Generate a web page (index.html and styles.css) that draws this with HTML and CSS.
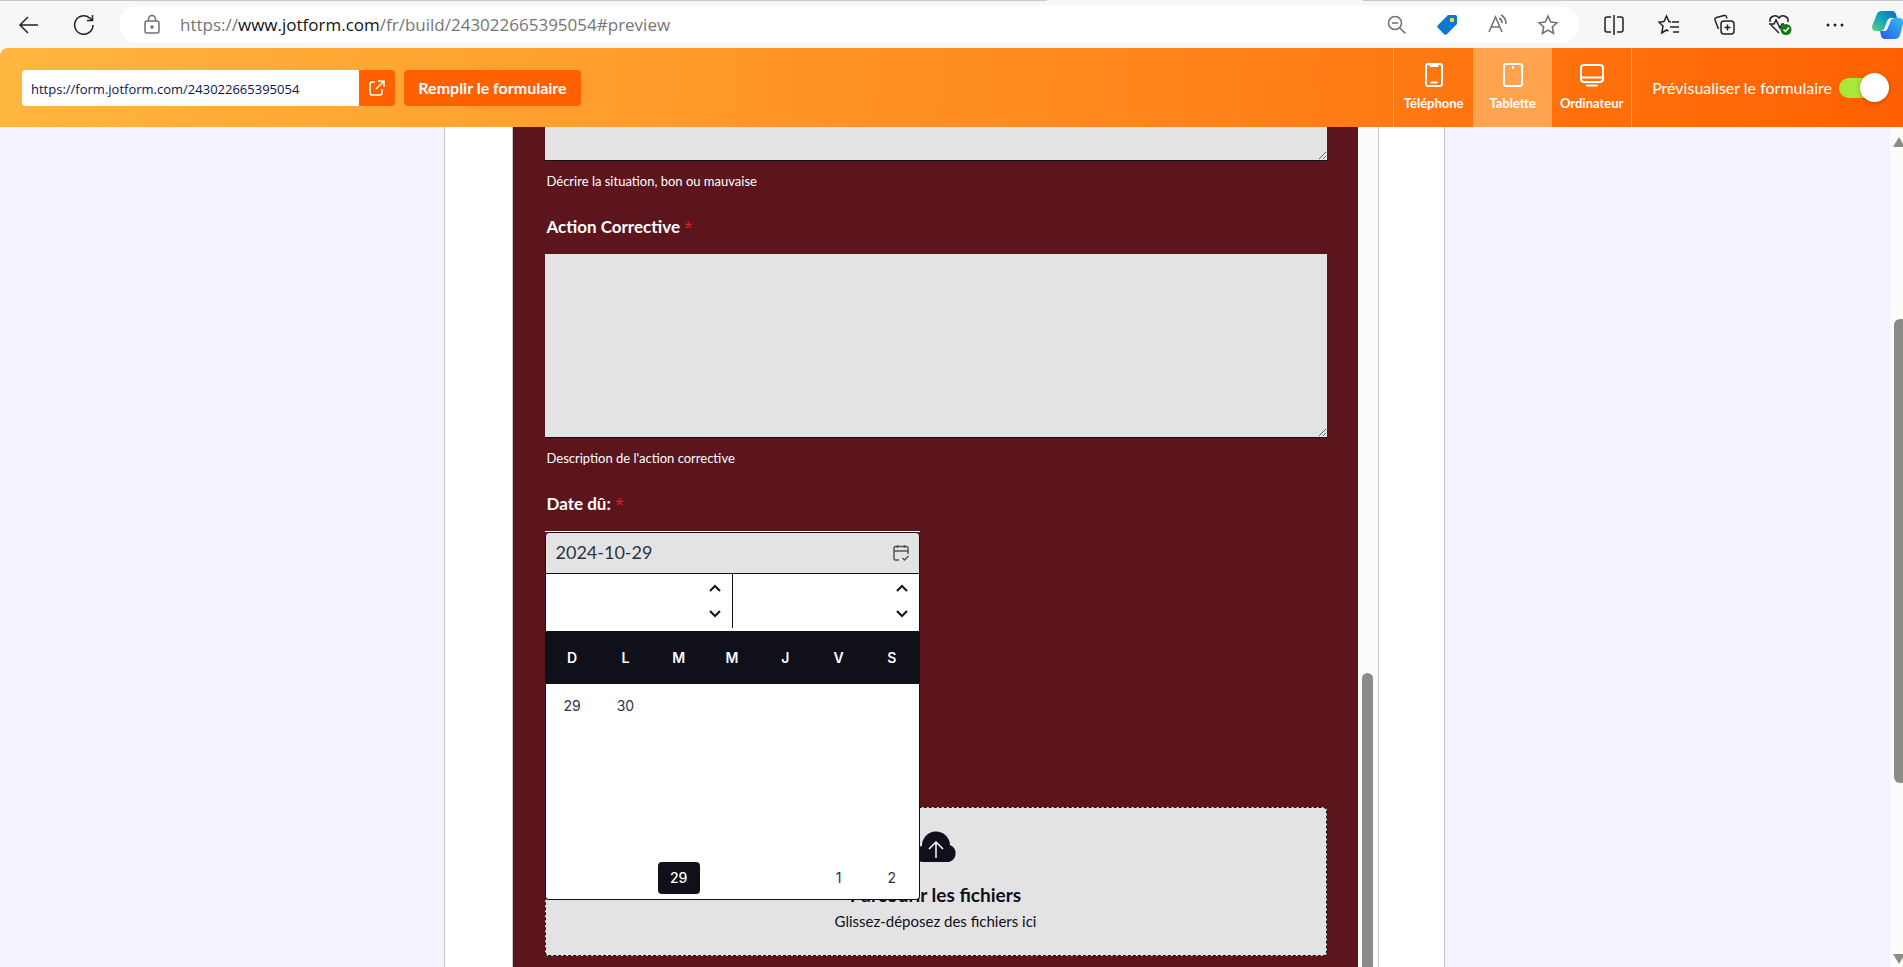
FILE: index.html
```
<!DOCTYPE html>
<html lang="fr">
<head>
  <meta charset="UTF-8">
  <meta name="viewport" content="width=device-width, initial-scale=1.0">
  <title>Prévisualiser le formulaire</title>
  <link rel="stylesheet" href="styles.css">
</head>
<body>

  <!-- browser bar -->
  <header class="browser">
    <button class="nav-btn" aria-label="Retour">
      <svg width="22" height="20" viewBox="0 0 22 20"><path d="M20 10H2M10 2L2 10l8 8"/></svg>
    </button>
    <button class="nav-btn reload" aria-label="Actualiser">
      <svg width="22" height="22" viewBox="0 0 22 22"><path d="M20 11a9.200 9.200 0 1 1-3.500-7.200L19 6M19.500 1v5.500H14"/></svg>
    </button>
    <div class="address">
      <svg class="lock" width="18" height="22" viewBox="0 0 18 22"><rect x="2" y="7" width="14" height="12" rx="2"/><path d="M5.500 7V5a3.500 3.500 0 0 1 7 0v2"/><circle cx="9" cy="13" r="1" fill="#555"/></svg>
      <span class="url">https://<b>www.jotform.com</b>/fr/build/243022665395054#preview</span>
      <div class="address-icons">
        <svg width="20" height="22" viewBox="0 0 20 22"><circle cx="8" cy="9" r="6.500"/><path d="M5 9h6M13 14l5.500 5.500"/></svg>
        <svg width="24" height="22" viewBox="0 0 24 22"><path d="M13 1h7a2 2 0 0 1 2 2v7L12 20a2 2 0 0 1-3 0l-6-6a2 2 0 0 1 0-3z" fill="#0b78d0" stroke="none"/><circle cx="17" cy="6" r="2.300" fill="#f6d34a" stroke="none"/></svg>
        <svg width="22" height="22" viewBox="0 0 22 22"><path d="M2 18L8.500 3 15 18M4.500 13h8M12 4c2 1 3 3 3 5M14 1c4 2 5 5 5 9"/></svg>
        <svg width="22" height="22" viewBox="0 0 22 22"><path d="M11 2l2.700 6 6.300.7-4.700 4.300 1.300 6.500-5.600-3.300-5.600 3.300 1.300-6.500L2 8.700 8.300 8z"/></svg>
      </div>
    </div>
    <div class="browser-icons">
      <svg width="22" height="22" viewBox="0 0 22 22"><path d="M8 3H4a2 2 0 0 0-2 2v11a2 2 0 0 0 2 2h4M14 3h4a2 2 0 0 1 2 2v11a2 2 0 0 1-2 2h-4M11 1v20"/></svg>
      <svg width="22" height="22" viewBox="0 0 22 22"><path d="M13 8l-2-.500L8.500 2 6 7.500l-5 .700L5 12l-1.200 7 4.700-3 2 1.200M14 8h7M12 13h9M15 18h6"/></svg>
      <svg width="22" height="22" viewBox="0 0 22 22"><rect x="8" y="7" width="13" height="13" rx="3"/><path d="M14.500 10.500v6M11.500 13.500h6M5.500 15L2 6a2 2 0 0 1 1.500-2.500L11 1.500A2 2 0 0 1 13.500 3l.5 1.500"/></svg>
      <svg width="24" height="22" viewBox="0 0 24 22"><path d="M11 19L3 11M2 8c-1-6 6-8 9-4 3-4 10-2 9 4M1 10h5l2-4 4 8 2-4h2"/><circle cx="18" cy="15.500" r="5.500" fill="#107c10" stroke="none"/><path d="M15.500 15.500l2 2 3.500-4" stroke="#fff"/></svg>
      <svg width="20" height="22" viewBox="0 0 20 22"><g fill="#222" stroke="none"><circle cx="3" cy="11" r="1.500"/><circle cx="10" cy="11" r="1.500"/><circle cx="17" cy="11" r="1.500"/></g></svg>
      <svg class="copilot" width="32" height="28" viewBox="0 0 32 28">
        <defs>
          <linearGradient id="cp1" x1="0" y1="1" x2="1" y2="0"><stop offset="0" stop-color="#5fd08a"/><stop offset=".5" stop-color="#12a5b5"/><stop offset="1" stop-color="#1066c4"/></linearGradient>
          <linearGradient id="cp2" x1="0" y1="1" x2="1" y2="0"><stop offset="0" stop-color="#2458e6"/><stop offset="1" stop-color="#35c3f0"/></linearGradient>
        </defs>
        <g stroke="none">
          <path d="M10 0h10c3 0 4 2 5 7h-5c-3 0-4 1-5 4l-2 5c-1 3-2 4-4.500 4H5c-4 0-6-2-4.500-6L4.500 4C5.500 1 7 0 10 0z" fill="url(#cp1)"/>
          <path d="M22 28H13c-3 0-4-2-5-8h3c3 0 4-1 5-4l2-5c1-3 2-4 4.500-4h4c4 0 6 2 4.500 6l-3 11c-1 3-3 4-6 4z" fill="url(#cp2)"/>
          <path d="M20 7c-3 0-4 1-5 4l-2 5c-1 3-2 4-4 4h2c3 0 4-1 5-4l2-5c1-3 2-4 4.500-4z" fill="#fff"/>
        </g>
      </svg>
    </div>
  </header>

  <!-- preview toolbar -->
  <div class="toolbar">
    <div class="share">
      <input type="text" class="share-url" aria-label="Lien du formulaire" value="https://form.jotform.com/243022665395054">
      <button class="share-open" aria-label="Ouvrir">
        <svg width="16" height="18" viewBox="0 0 16 18"><path d="M6 3H3a2 2 0 0 0-2 2v9a2 2 0 0 0 2 2h8a2 2 0 0 0 2-2v-4M9 2h6v6M15 2L7 10"/></svg>
      </button>
    </div>
    <button class="fill-btn">Remplir le formulaire</button>
    <div class="devices">
      <button class="device">
        <svg width="20" height="26" viewBox="0 0 20 26"><rect x="2" y="2" width="16" height="22" rx="2"/><path d="M6.500 2v2h7V2M7.500 20.500h5"/></svg>
        Téléphone
      </button>
      <button class="device active">
        <svg width="22" height="26" viewBox="0 0 22 26"><rect x="2" y="2" width="18" height="22" rx="2"/><path d="M11 5v1"/></svg>
        Tablette
      </button>
      <button class="device">
        <svg width="26" height="26" viewBox="0 0 26 26"><rect x="2" y="3" width="22" height="17" rx="3"/><path d="M2 15.500h22M8 23.500h10"/></svg>
        Ordinateur
      </button>
    </div>
    <label class="preview">
      Prévisualiser le formulaire
      <input type="checkbox" class="toggle" checked>
    </label>
  </div>

  <main class="workspace">
    <div class="canvas">
      <div class="tablet">
        <div class="frame">
          <form class="form">
            <textarea class="area cut" aria-label="Situation"></textarea>
            <p class="hint">Décrire la situation, bon ou mauvaise</p>

            <label class="label" for="action">Action Corrective <span class="req">*</span></label>
            <textarea class="area" id="action"></textarea>
            <p class="hint">Description de l'action corrective</p>

            <label class="label" for="due">Date dû: <span class="req">*</span></label>
            <div class="date">
              <input type="text" class="date-input" id="due" value="2024-10-29">
              <svg class="date-icon" width="18" height="18" viewBox="0 0 18 18"><path d="M7 16H3.500A1.500 1.500 0 0 1 2 14.500V4a1.500 1.500 0 0 1 1.500-1.500h11A1.500 1.500 0 0 1 16 4v6M2 7h14M5.500 1v3M12.500 1v3M10.500 14l2 2 4-4"/></svg>

              <!-- calendar popup -->
              <div class="calendar">
                <div class="cal-nav">
                  <div class="cal-part">
                    <button type="button" aria-label="Mois suivant"><svg width="12" height="8" viewBox="0 0 12 8"><path d="M1 7l5-5 5 5"/></svg></button>
                    <button type="button" aria-label="Mois précédent"><svg width="12" height="8" viewBox="0 0 12 8"><path d="M1 1l5 5 5-5"/></svg></button>
                  </div>
                  <div class="cal-part">
                    <button type="button" aria-label="Année suivante"><svg width="12" height="8" viewBox="0 0 12 8"><path d="M1 7l5-5 5 5"/></svg></button>
                    <button type="button" aria-label="Année précédente"><svg width="12" height="8" viewBox="0 0 12 8"><path d="M1 1l5 5 5-5"/></svg></button>
                  </div>
                </div>
                <table class="days">
                  <thead>
                    <tr><th>D</th><th>L</th><th>M</th><th>M</th><th>J</th><th>V</th><th>S</th></tr>
                  </thead>
                  <tbody>
                    <tr><td>29</td><td>30</td><td></td><td></td><td></td><td></td><td></td></tr>
                    <tr><td></td><td></td><td></td><td></td><td></td><td></td><td></td></tr>
                    <tr><td></td><td></td><td></td><td></td><td></td><td></td><td></td></tr>
                    <tr><td></td><td></td><td></td><td></td><td></td><td></td><td></td></tr>
                    <tr><td></td><td></td><td><span class="selected">29</span></td><td></td><td></td><td>1</td><td>2</td></tr>
                  </tbody>
                </table>
              </div>
            </div>

            <div class="upload">
              <svg width="44" height="32" viewBox="0 0 44 32"><path d="M9 31a8 8 0 0 1-1-16 14 14 0 0 1 28-1 9 9 0 0 1-1 17z" fill="#10101a"/><path d="M22 27V11M15 18l7-7 7 7" fill="none" stroke="#fff" stroke-width="1.500"/></svg>
              <strong>Parcourir les fichiers</strong>
              <span>Glissez-déposez des fichiers ici</span>
            </div>
          </form>
          <div class="frame-scroll"><div class="frame-thumb"></div></div>
        </div>
      </div>
    </div>
    <div class="page-scroll">
      <svg width="12" height="10" viewBox="0 0 12 10"><path d="M6 0l6 10H0z"/></svg>
      <div class="page-thumb"></div>
      <svg width="12" height="10" viewBox="0 0 12 10"><path d="M6 10l6-10H0z"/></svg>
    </div>
  </main>

</body>
</html>
```
FILE: styles.css
```
* { margin: 0; padding: 0; box-sizing: border-box; }
body {
  height: 100vh;
  display: flex;
  flex-direction: column;
  overflow: hidden;
  font-family: Lato, sans-serif;
  background: #f7f7f7;
}
button { border: none; background: none; font-family: inherit; cursor: pointer; }
svg { flex: none; display: block; }

/* browser bar */
.browser {
  position: relative;
  display: flex;
  align-items: center;
  flex: none;
  height: 48px;
  padding: 1px 0 0 18px;
  background: linear-gradient(#c9c9c9, #c9c9c9) 0 0 / 100% 1px no-repeat;
  overflow: hidden;
}
/* bottom edge of the open tab */
.browser::before {
  content: "";
  position: absolute;
  top: 0;
  left: 55%;
  width: 316px;
  height: 1px;
  background: #f7f7f7;
}
.browser svg { fill: none; stroke: #222; stroke-width: 1.5; }
.nav-btn { width: 22px; }
.reload { margin: 0 24px 0 33px; }
.address {
  flex: 1;
  display: flex;
  align-items: center;
  height: 37px;
  padding: 0 20px 0 24px;
  border-radius: 19px;
  background: #fff;
}
.address .lock, .address-icons svg { stroke: #707070; }
.url {
  flex: 1;
  margin-left: 19px;
  font: 17px/24px "Open Sans", sans-serif;
  color: #757575;
}
.url b { font-weight: 400; color: #111; }
.address-icons { display: flex; gap: 28px; }
.browser-icons {
  display: flex;
  align-items: center;
  gap: 33px;
  margin: 0 -1px 0 24px;
}
.copilot { margin-left: -6px; }

/* toolbar */
.toolbar {
  display: flex;
  align-items: center;
  flex: none;
  height: 79px;
  padding-left: 22px;
  border-top-left-radius: 8px;
  background: linear-gradient(95deg, #ffb63f 0%, #ff8a1f 55%, #ff6100 100%);
  color: #fff;
}
.share { display: flex; width: 373px; height: 36px; border-radius: 4px; overflow: hidden; }
.share-url {
  flex: 1;
  min-width: 0;
  padding: 2px 9px 0;
  border: none;
  font: 13px "Open Sans", sans-serif;
  color: #0a1551;
}
.share-open { width: 36px; display: flex; align-items: center; justify-content: center; background: #ff6100; }
.share-open svg { fill: none; stroke: #fff; stroke-width: 1.5; }
.fill-btn {
  width: 177px;
  height: 36px;
  margin-left: 9px;
  border-radius: 4px;
  background: #ff6100;
  color: #fff;
  font-size: 16px;
  font-weight: 700;
}
.devices { display: flex; height: 100%; margin-left: auto; border: 1px solid #ffa05c; border-width: 0 1px; }
.device {
  width: 79px;
  display: flex;
  flex-direction: column;
  align-items: center;
  gap: 5px;
  padding-top: 14px;
  color: #fff;
  font-size: 13px;
  line-height: 20px;
  font-weight: 700;
}
.device svg { fill: none; stroke: #fff; stroke-width: 2; stroke-linecap: round; }
.device.active { background: #ffa34f; }
.preview {
  display: flex;
  align-items: center;
  gap: 7px;
  padding: 0 14px 0 20px;
  font-size: 16px;
  white-space: nowrap;
}
.toggle {
  appearance: none;
  display: flex;
  justify-content: flex-end;
  align-items: center;
  width: 50px;
  height: 20px;
  border-radius: 10px;
  background: #a8e838;
}
.toggle::before {
  content: "";
  width: 29px;
  height: 29px;
  flex: none;
  border-radius: 50%;
  background: #fff;
  box-shadow: 0 1px 4px rgba(0, 0, 0, 0.3);
}

/* workspace */
.workspace { flex: 1; min-height: 0; display: flex; background: #f3f3ff; }
.canvas { flex: 1; display: flex; justify-content: center; padding-right: 2px; }
.tablet {
  width: 1001px;
  padding: 0 65px 0 67px;
  border: 1px solid #c8c8c8;
  border-width: 0 1px;
  background: #fff;
}
.frame { display: flex; height: 100%; border: 1px solid #c8c8c8; border-width: 0 1px; overflow: hidden; }
.form { flex: 1; padding: 0 31px 0 32px; background: #5c151d; }
.area {
  display: block;
  width: 100%;
  height: 184px;
  border: none;
  border-bottom: 1px solid #10101a;
  background: #e3e3e3;
  resize: vertical;
}
.area.cut { height: 34px; }
.hint { margin: 10px 2px 24px; font-size: 13px; line-height: 20px; color: #fff; }
.label {
  display: block;
  margin: 0 2px 15px;
  font-size: 17px;
  line-height: 24px;
  font-weight: 700;
  color: #fff;
}
.req { font-family: "Open Sans", sans-serif; font-size: 16px; font-weight: 400; line-height: 20px; color: #d9202c; }
.date { position: relative; width: 375px; border-top: 1px solid #fff; }
.date-input {
  display: block;
  width: 100%;
  height: 42px;
  padding: 0 10px 2px;
  border: 1px solid #10101a;
  border-radius: 4px 4px 0 0;
  background: #e3e3e3;
  font: 18px Lato, sans-serif;
  color: #2c3345;
}
.date-icon { position: absolute; top: 12px; right: 10px; fill: none; stroke: #555; stroke-width: 1.5; }
.calendar {
  position: absolute;
  top: 42px;
  left: 0;
  width: 100%;
  border: 1px solid #10101a;
  border-top: none;
  border-radius: 0 0 4px 4px;
  background: #fff;
}
.cal-nav { display: flex; padding-bottom: 3px; }
.cal-part {
  flex: 1;
  display: flex;
  flex-direction: column;
  align-items: flex-end;
  gap: 18px;
  height: 54px;
  padding: 10px 11px 0 0;
}
.cal-part:first-child { border-right: 1px solid #10101a; }
.cal-part button { height: 8px; }
.cal-part svg { fill: none; stroke: #10101a; stroke-width: 2; }
.days { width: 100%; table-layout: fixed; border-collapse: collapse; font: 14px Inter, sans-serif; text-align: center; color: #2c3345; }
.days th { height: 53px; background: #10101a; color: #fff; font-weight: 600; }
.days td { height: 43px; }
.selected {
  display: block;
  width: 42px;
  margin: 0 auto;
  border-radius: 4px;
  background: #10101a;
  color: #fff;
  line-height: 32px;
  font-weight: 500;
}
.upload {
  display: flex;
  flex-direction: column;
  align-items: center;
  height: 149px;
  margin-top: 233px;
  padding-top: 23px;
  border: 1px dashed #10101a;
  border-radius: 4px;
  background: #e3e3e3;
  color: #10101a;
}
.upload strong { margin-top: 20px; font-size: 19px; line-height: 24px; }
.upload span { margin-top: 4px; font-size: 15px; line-height: 20px; }
.frame-scroll { width: 20px; padding: 546px 5px 0 4px; background: #fcfcfc; }
.frame-thumb { height: 100%; border-radius: 6px 6px 0 0; background: #8b8b8b; }
.page-scroll {
  width: 13px;
  display: flex;
  flex-direction: column;
  padding: 10px 0 3px 3px;
  background: #fcfcfc;
}
.page-scroll svg { fill: #8b8b8b; }
.page-thumb { flex: 1; margin: 172px -4px 171px 1px; border-radius: 6px; background: #8b8b8b; }
```
